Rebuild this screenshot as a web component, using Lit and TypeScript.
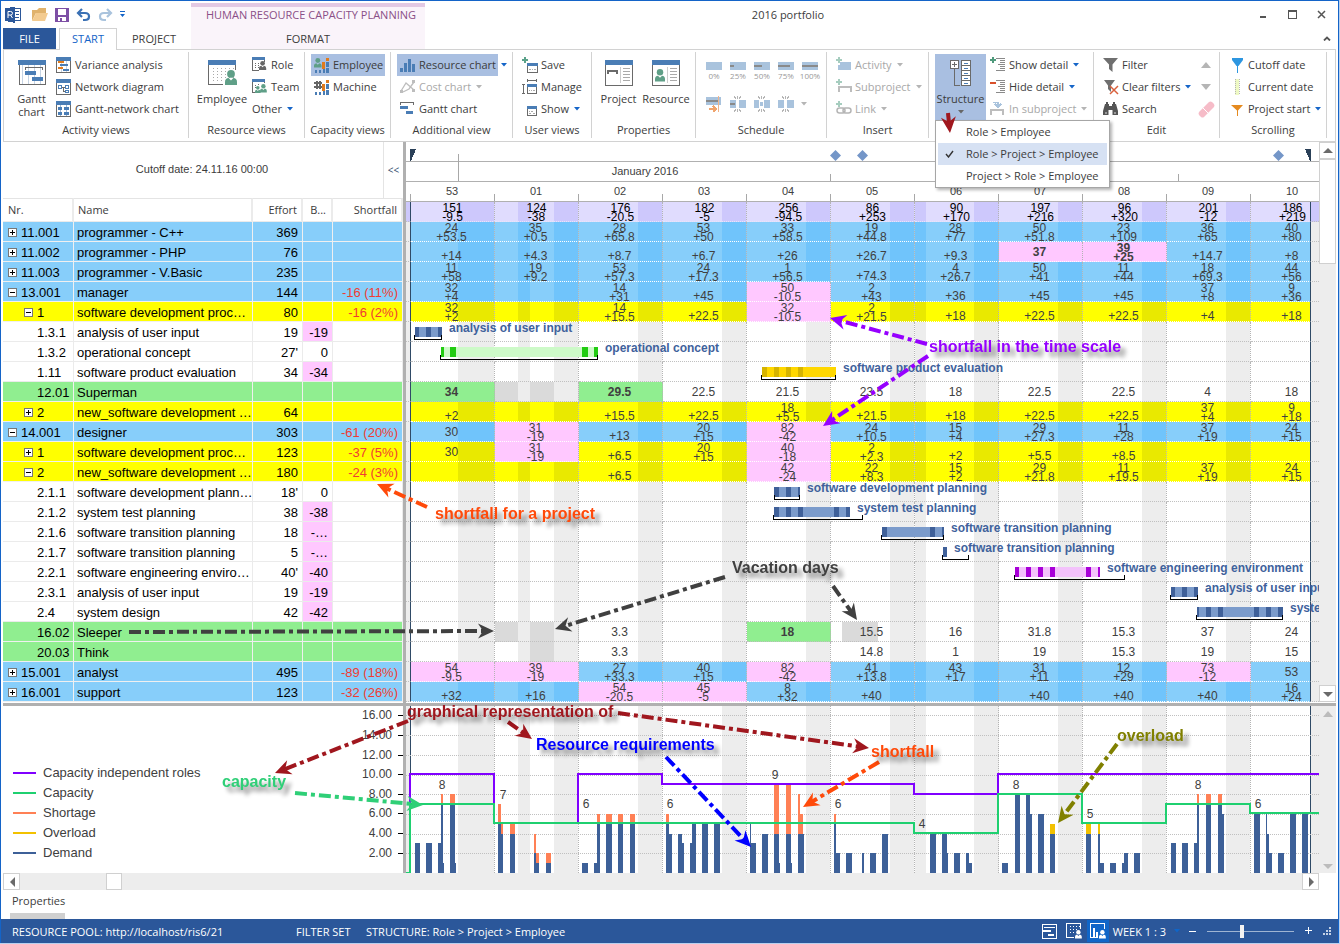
import { LitElement, html, svg, css, nothing, TemplateResult } from "lit";
import { customElement, property } from "lit/decorators.js";
import { classMap } from "lit/directives/class-map.js";
import { styleMap } from "lit/directives/style-map.js";

/* ---------- shared styles ---------- */

const base = css`
  * { box-sizing: border-box; }
  button { background: none; border: 0; padding: 0; margin: 0; font: inherit; color: inherit; cursor: default; }
  svg { display: block; flex: none; }
`;

/* ---------- icons ---------- */

const BLUE = "#4a7db5";
const GREY = "#6a6a6a";

const icon = (w: number, h: number, body: unknown, smooth = false) => html`<svg
  width=${w} height=${h} viewBox="0 0 ${w} ${h}" fill="none"
  shape-rendering=${smooth ? "auto" : "crispEdges"} aria-hidden="true">${body}</svg>`;

const frame16 = svg`<path d="M.5 1v14h14V1" fill="#fff" stroke=${GREY}/><path d="M0 0h15v4H0z" fill=${BLUE}/>`;
const person = (x: number, y: number, c: string, s = 1) => svg`<g transform="translate(${x} ${y}) scale(${s})" fill=${c} shape-rendering="auto">
  <circle cx="4" cy="2.6" r="2.6"/><path d="M0 10V8q0-2.4 2.4-2.6L4 7l1.600-1.600Q8 5.600 8 8v2z"/></g>`;
const plus = (c = "#5aa28a") => svg`<path d="M2 0h2v2h2v2H4v2H2V4H0V2h2z" fill=${c}/>`;
const bars = svg`<path d="M8 5h3v7H8zM12 1h3v3h-3z" fill="#e07b1e"/><path d="M12 5h3v5h-3zM1 13h2v3H1zM5 13h2v3H5zM9 12h2v4H9zM12 11h3v5h-3z" fill=${BLUE}/>`;
const bigDots = svg`<path d="M5 8v14M9 8v14M13 8v14M17 8v14M21 8v14M25 8v14" stroke="#a9a9a9" stroke-dasharray="1 2"/>`;
const outline = svg`<path d="M6 1.500h9M10 3.500h5M10 5.500h5M8 7.500h7M10 9.500h5M10 11.500h5M6 13.500h9" stroke="#8a8a8a"/>`;
const page = svg`<path d="M.5.5h27v25H.5z" fill="#fff" stroke=${GREY}/><path d="M0 0h28v5H0z" fill=${BLUE}/><path d="M15.500 7v16" stroke="#ccc"/><path d="M18 8.500h7M18 11.500h7M18 14.500h7M18 17.500h7M18 20.500h7" stroke="#aaa"/>`;

const icons: Record<string, TemplateResult> = {
  gantt: icon(28, 25, svg`<path d="M1 1h26v23H1z" fill="#fff" stroke=${GREY}/><path d="M0 0h28v5H0z" fill=${BLUE}/>
    <path d="M4.500 5v19M10.500 5v19M16.500 5v19M22.500 5v19" stroke="#c5d3e4"/>
    <path d="M7.500 10V7.500h17V10" stroke=${GREY}/><path d="M7 11h11v4H7zM14 17h11v4H14z" fill=${BLUE}/>`),
  variance: icon(16, 16, svg`${frame16}<path d="M5.500 4v11M10.500 4v11" stroke="#c5d3e4"/><path d="M2 4h6v2H2zM2 10h5v2H2z" fill="#e07b1e"/><path d="M4 7h8v2H4zM7 12h6v2H7z" fill=${BLUE}/>`),
  network: icon(16, 16, svg`${frame16}<path d="M6 8h3M7.500 8v4H9" stroke=${GREY}/><path d="M2.500 6.500h3v3h-3zM9.500 6.500h3v3h-3zM9.500 11.500h3v2h-3z" fill="#fff" stroke=${BLUE}/>`),
  ganttnet: icon(16, 16, svg`${frame16}<path d="M4.500 4v11M10.500 4v11" stroke="#9db6d3"/><path d="M2 6h4v3H2zM8 6h5v3H8zM2 11h4v3H2zM8 11h5v3H8z" fill=${BLUE}/>`),
  bigEmployee: icon(29, 25, svg`<path d="M15 24.500H.5V1M27.500 1v9" stroke=${GREY}/><path d="M0 0h28v5H0z" fill=${BLUE}/>${bigDots}${person(16, 9, "#fff", 1.600)}${person(17, 10, "#5f9f87", 1.500)}`),
  role: icon(16, 16, svg`<path d="M.5 1v12h6M12.500 2v3" stroke=${GREY}/><path d="M0 0h13v3H0z" fill=${BLUE}/><path d="M3 6.500h1M3 8.500h1M3 10.500h1M6 6.500h1M6 8.500h1M6 10.500h1" stroke=${GREY}/>${person(7, 4, "#666", 0.900)}`),
  team: icon(16, 16, svg`<path d="M.5 1v12h3M12.500 2v2" stroke=${GREY}/><path d="M0 0h13v3H0z" fill=${BLUE}/><path d="M3 6.500h1M6 5.500h1M3 8.500h1" stroke=${GREY}/>${person(3, 7, "#5f9f87", 0.700)}${person(8, 5, "#5f9f87", 0.850)}`),
  employee: icon(17, 16, svg`${bars}${person(0, 1, "#5f9f87", 0.950)}`),
  machine: icon(17, 16, svg`${bars}<path d="M2 2h2v8H2zM5 2h2v8H5zM0 3h8v2H0zM0 7h8v2H0z" fill="#666"/>`),
  chart: icon(16, 16, svg`<path d="M0 11h3v4H0zM4 6h3v9H4zM8 2h3v13H8zM12 7h3v8h-3z" fill=${BLUE}/>`),
  cost: icon(16, 16, svg`<path d="M1 12l5-8 8 7M3 13l6-3 5-7" stroke="#bdbdbd" stroke-width="1.300"/><path d="M0 11h3v3H0zM12 1h3v3h-3zM12 10h3v3h-3z" fill="#bdbdbd"/>`, true),
  ganttSmall: icon(16, 16, svg`<path d="M.5 4V1.500h13V4" stroke=${GREY}/><path d="M0 5h8v3H0zM6 10h7v3H6z" fill=${BLUE}/>`),
  save: icon(16, 16, svg`${plus()}<path d="M5.500 6v9.500h10V6" fill="#fff" stroke=${GREY}/><path d="M5 6h11v3H5z" fill=${BLUE}/><path d="M7 12.500h2M10 12.500h1M12 12.500h2" stroke="#aaa"/>`),
  manage: icon(16, 16, svg`<path d="M5 1.500h10M5.500 0v3M14.500 0v3M1.500 5v10M0 5.500h3M0 14.500h3M5.500 6v8.500h9V6" stroke=${GREY}/><path d="M5 5h10v3H5z" fill=${BLUE}/><path d="M7 11.500h1M9 11.500h1M11 11.500h2" stroke="#aaa"/>`),
  show: icon(16, 16, svg`<path d="M5.500 6v8.500h9V6" fill="#fff" stroke=${GREY}/><path d="M5 5h10v3H5z" fill=${BLUE}/><path d="M7 10.500h1M9 10.500h2M7 12.500h2M11 12.500h2" stroke="#aaa"/>`),
  bigProject: icon(28, 26, svg`${page}<path d="M2 10h11v4h-2v-2H4v2H2z" fill=${GREY}/>`),
  bigResource: icon(28, 26, svg`${page}${person(3, 9, "#5f9f87", 1.250)}`),
  activity: icon(16, 16, svg`<path d="M4 5h11v8H2V8h2z" fill="#a9c3dd"/>${plus("#a6cdbf")}`),
  subproject: icon(16, 16, svg`<path d="M3 13V8h12v5" stroke="#bdbdbd" stroke-width="2"/>${plus("#a6cdbf")}`),
  link: icon(16, 16, svg`<g shape-rendering="auto"><rect x="1" y="7" width="8" height="5" rx="2.500" stroke="#b5b5b5" stroke-width="1.500"/><rect x="7" y="7" width="8" height="5" rx="2.500" stroke="#b5b5b5" stroke-width="1.500"/></g>${plus("#a6cdbf")}`),
  structure: icon(22, 26, svg`<path d="M4.500 9v16.500H10" stroke=${GREY}/><path d="M.5.5h8v8h-8z" fill="#fff" stroke=${GREY}/><path d="M2 4.500h5M4.500 2v5" stroke=${GREY}/>
    <path d="M11.500.5h9v25h-9z" fill="#fff" stroke=${GREY}/><path d="M11 5.500h10M11 10.500h10M11 15.500h10M11 20.500h10" stroke=${GREY}/><path d="M14 3.500h4M14 8.500h4M14 13.500h4M14 18.500h4M14 23.500h4" stroke=${BLUE}/>`),
  showDetail: icon(16, 16, svg`${plus("#4f9a7c")}${outline}`),
  hideDetail: icon(16, 16, svg`<path d="M0 3h6v2H0z" fill="#d9512c"/>${outline}`),
  inSub: icon(16, 16, svg`<path d="M1 14V9h12v5" stroke="#bdbdbd" stroke-width="2"/><path d="M3 1.500h5V5M5 3l3 3 3-3" stroke="#a9c3dd" stroke-width="1.500"/>`),
  filter: icon(16, 16, svg`<path d="M0 1h15L9.500 7.500V15L6 12V7.500z" fill="#6f6f6f"/>`, true),
  clearFilter: icon(16, 16, svg`<path d="M1 1h11L8 6.500V13L5 10V6.500z" fill="#6f6f6f"/><path d="M7 7l8 8M15 7l-8 8" stroke="#d9603c" stroke-width="1.500"/>`, true),
  search: icon(16, 16, svg`<path d="M2 3h4v2h3V3h4l2 7v4H9.500V9h-4v5H0v-4z" fill="#555"/><path d="M3 1h2v2H3zM10 1h2v2h-2z" fill="#555"/><path d="M2 12h2M11 12h2" stroke="#ddd"/>`, true),
  cutoff: icon(16, 16, svg`<path d="M3 1h11v2L9.500 9h-2L3 3z" fill="#2d96e0"/><path d="M8 8h1v8H8z" fill="#2d96e0"/>`, true),
  current: icon(16, 16, svg`<path d="M6 0h4v16H6z" fill="#eef9c4"/><path d="M6.500 0v16M10.500 0v16" stroke="#b5b5b5" stroke-dasharray="1 1"/>`),
  start: icon(16, 16, svg`<path d="M2 4h12L9 9.500V15H8V9.500z" fill="#e58a1f"/>`, true),
  eraser: icon(17, 17, svg`<path d="M1 11L11 1q1.500-1 3 0l2 2q1 1.500 0 3L6 16q-1.500 1-3 0l-2-2q-1-1.500 0-3z" fill="#f6bcc8"/><path d="M5 7l5 5" stroke="#fff"/>`, true),
};

const caret = (c: string) => icon(6, 4, svg`<path d="M0 0h6L3 3.500z" fill=${c}/>`, true);

/* ---------- data ---------- */

const WEEKS = ["53", "01", "02", "03", "04", "05", "06", "07", "08", "09", "10"];

type Kind = "blue" | "yellow" | "green" | "plain" | "sum";
interface Bar { tone: string; from: number; to: number; dark: number[][]; span: number[]; label: string; labelAt: number; }
interface Row {
  kind: Kind; nr: string; name: string; effort?: string; b?: string; shortfall?: string;
  box?: "+" | "-"; child?: boolean; cells?: string[]; bar?: Bar;
}

const bar = (tone: string, from: number, to: number, dark: number[][], span: number[], labelAt: number, label: string): Bar =>
  ({ tone, from, to, dark, span, labelAt, label });
const list = (s: string) => s.split(",");

/* Cell notation: "top|bottom"; a leading p, g, v, w or u selects the fill, * means bold. */
const SUM = list("151|-9.5,124|-38,176|-20.5,182|-5,256|-94.5,86|+253,90|+170,197|+216,96|+320,201|-12,186|+219");

const ROWS: Row[] = [
  { kind: "blue", nr: "11.001", name: "programmer - C++", effort: "369", box: "+", cells: list("24|+53.5,35|+0.5,28|+65.8,53|+50,33|+58.5,19|+44.8,28|+77,50|+51.8,23|+109,36|+65,40|+80") },
  { kind: "blue", nr: "11.002", name: "programmer - PHP", effort: "76", box: "+", cells: list("|+14,|+4.3,|+8.7,|+6.7,|+26,|+26.7,|+9.3,p*37,p*39|+25,|+14.7,|+8") },
  { kind: "blue", nr: "11.003", name: "programmer - V.Basic", effort: "235", box: "+", cells: list("11|+58,19|+9.2,53|+57.3,24|+17.3,1|+56.5,|+74.3,4|+26.7,50|+41,11|+44,18|+69.3,44|+56") },
  { kind: "blue", nr: "13.001", name: "manager", effort: "144", shortfall: "-16 (11%)", box: "-", cells: list("32|+4,,14|+31,|+45,p50|-10.5,2|+43,|+36,|+45,|+45,37|+8,9|+36") },
  { kind: "yellow", nr: "1", name: "software development proc…", effort: "80", shortfall: "-16 (2%)", box: "-", child: true, cells: list("32|+2,,14|+15.5,|+22.5,p32|-10.5,2|+21.5,|+18,|+22.5,|+22.5,|+4,|+18") },
  { kind: "plain", nr: "1.3.1", name: "analysis of user input", effort: "19", b: "-19", bar: bar("steel", 415, 442, [[415, 419], [426, 431], [438, 442]], [414, 442], 449, "analysis of user input") },
  { kind: "plain", nr: "1.3.2", name: "operational concept", effort: "27'", b: "0", bar: bar("lime", 441, 598, [[441, 444], [450, 456], [582, 588], [594, 598]], [440, 598], 605, "operational concept") },
  { kind: "plain", nr: "1.11", name: "software product evaluation", effort: "34", b: "-34", bar: bar("gold", 762, 836, [[762, 767], [774, 779], [786, 791], [798, 803]], [761, 836], 843, "software product evaluation") },
  { kind: "green", nr: "12.01", name: "Superman", cells: list("g*34,v,g*29.5,22.5,21.5,23.5,18,22.5,22.5,4,18") },
  { kind: "yellow", nr: "2", name: "new_software development …", effort: "64", box: "+", child: true, cells: list("|+2,,|+15.5,|+22.5,18|+5.5,|+21.5,|+18,|+22.5,|+22.5,37|+4,9|+18") },
  { kind: "blue", nr: "14.001", name: "designer", effort: "303", shortfall: "-61 (20%)", box: "-", cells: list("30,p31|-19,|+13,20|+15,p82|-42,24|+10.5,15|+4,29|+27.3,11|+28,37|+19,24|+15") },
  { kind: "yellow", nr: "1", name: "software development proc…", effort: "123", shortfall: "-37 (5%)", box: "+", child: true, cells: list("30,p31|-19,|+6.5,20|+15,p40|-18,2|+2.3,|+2,|+5.5,|+8.5,,") },
  { kind: "yellow", nr: "2", name: "new_software development …", effort: "180", shortfall: "-24 (3%)", box: "-", child: true, cells: list(",,|+6.5,,p42|-24,22|+8.3,15|+2,29|+21.8,11|+19.5,37|+19,24|+15") },
  { kind: "plain", nr: "2.1.1", name: "software development plann…", effort: "18'", b: "0", bar: bar("steel", 774, 800, [[774, 779], [786, 791], [798, 800]], [774, 800], 807, "software development planning") },
  { kind: "plain", nr: "2.1.2", name: "system test planning", effort: "38", b: "-38", bar: bar("steel", 774, 850, [[774, 779], [786, 791], [798, 803], [834, 839], [846, 850]], [773, 863], 857, "system test planning") },
  { kind: "plain", nr: "2.1.6", name: "software transition planning", effort: "18", b: "-…", bar: bar("steel", 882, 944, [[882, 887], [930, 935], [942, 944]], [881, 944], 951, "software transition planning") },
  { kind: "plain", nr: "2.1.7", name: "software transition planning", effort: "5", b: "-…", bar: bar("steel", 943, 947, [[943, 947]], [942, 969], 954, "software transition planning") },
  { kind: "plain", nr: "2.2.1", name: "software engineering enviro…", effort: "40'", b: "-40", bar: bar("violet", 1015, 1100, [[1015, 1019], [1026, 1031], [1038, 1043], [1050, 1055], [1086, 1091], [1098, 1100]], [1014, 1125], 1107, "software engineering environment") },
  { kind: "plain", nr: "2.3.1", name: "analysis of user input", effort: "19", b: "-19", bar: bar("steel", 1171, 1198, [[1171, 1175], [1182, 1187], [1194, 1198]], [1170, 1198], 1205, "analysis of user input") },
  { kind: "plain", nr: "2.4", name: "system design", effort: "42", b: "-42", bar: bar("steel", 1197, 1283, [[1197, 1199], [1206, 1211], [1218, 1223], [1254, 1259], [1266, 1271], [1278, 1283]], [1196, 1283], 1290, "system design") },
  { kind: "green", nr: "16.02", name: "Sleeper", cells: list(",v,3.3,,g*18,u15.5,16,31.8,15.3,37,24") },
  { kind: "green", nr: "20.03", name: "Think", cells: list(",w,3.3,,,14.8,1,19,15.3,19,15") },
  { kind: "blue", nr: "15.001", name: "analyst", effort: "495", shortfall: "-89 (18%)", box: "+", cells: list("p54|-9.5,p39|-19,27|+33.3,40|+15,p82|-42,41|+13.8,43|+17,31|+11,12|+29,p73|-12,53") },
  { kind: "blue", nr: "16.001", name: "support", effort: "123", shortfall: "-32 (26%)", box: "+", cells: list("|+32,|+16,p54|-20.5,p45|-5,8|+32,|+40,,|+40,|+40,|+40,16|+24") },
];

/* Start x, end x, demand, then total and colour of what lies above the demand. */
type Load = [number, number, number, number?, string?];
const S = "#ff8055", O = "#f2c100";
const LOADS: Load[] = [
  [415, 420, 3], [426, 432, 3], [438, 441, 3], [441, 443, 7, 8, S], [443, 444, 1], [450, 455, 7, 8, S], [455, 456, 1],
  [498, 501, 5, 7, S], [501, 503, 4, 5, S], [510, 515, 4, 5, S], [534, 536, 2, 4, S], [536, 539, 1, 2, S], [546, 551, 1, 2, S],
  [582, 588, 1], [594, 597, 1], [597, 600, 5, 6, S], [606, 612, 5, 6, S], [618, 623, 5, 6, S], [630, 635, 5, 6, S],
  [666, 669, 5, 6, S], [669, 672, 4], [678, 682, 4], [682, 684, 3], [690, 692, 3], [692, 696, 5], [702, 708, 5], [714, 720, 5],
  [750, 751, 5], [751, 756, 3], [762, 768, 4], [774, 779, 4, 9, S], [779, 780, 1], [786, 791, 4, 9, S], [791, 792, 1], [798, 800, 4, 8, S], [800, 803, 4, 6, S], [803, 804, 4],
  [834, 836, 5, 6, S], [836, 840, 2], [846, 852, 2], [862, 864, 2], [870, 876, 2], [882, 888, 4],
  [930, 936, 4], [942, 947, 4], [947, 948, 2], [954, 960, 2], [966, 969, 2], [969, 972, 1],
  [1002, 1008, 1], [1015, 1020, 8], [1026, 1030, 8], [1030, 1032, 6], [1038, 1044, 6], [1050, 1055, 4, 5, O],
  [1086, 1091, 4, 5, O], [1098, 1100, 4, 5, O], [1100, 1104, 1], [1110, 1116, 1], [1122, 1124, 1], [1124, 1128, 2], [1134, 1140, 2],
  [1171, 1176, 3], [1182, 1188, 3], [1194, 1197, 3], [1197, 1199, 7, 8, S], [1206, 1211, 7, 8, S], [1218, 1222, 7, 8, S], [1222, 1224, 6],
  [1254, 1260, 6], [1266, 1267, 6], [1267, 1269, 4], [1269, 1272, 2], [1278, 1284, 2], [1290, 1296, 6], [1302, 1308, 6],
];
const PEAKS: [number, number, string][] = [
  [442, 789, "8"], [503, 799, "7"], [586, 808, "6"], [670, 808, "6"], [775, 779, "9"], [838, 808, "6"],
  [922, 828, "4"], [1016, 789, "8"], [1090, 818, "5"], [1198, 789, "8"], [1258, 808, "6"],
];
const level = (v: number) => Math.round(873 - 9.85 * v);

/* ---------- ribbon ---------- */

@customElement("ribbon-bar")
export class RibbonBar extends LitElement {
  static styles = [base, css`
    :host { display: flex; border: 1px solid #d2d2d2; height: 93px; color: #3c3c3c; }
    .group { flex: none; display: flex; flex-direction: column; margin-top: 2px; height: 86px; padding: 2px 0 0 6px; border-right: 1px solid #d2d2d2; }
    .body { display: flex; height: 66px; }
    .caption { margin-left: -6px; text-align: center; line-height: 20px; height: 18px; }
    .g1 { width: 185px; } .g2 { width: 116px; } .g3 { width: 86px; } .g4 { width: 122px; } .g5 { width: 79px; }
    .g6 { width: 104px; } .g7 { width: 131px; } .g8 { width: 102px; } .g9 { width: 165px; } .g10 { width: 126px; } .g11 { width: 107px; }
    .stack { display: flex; flex-direction: column; align-items: flex-start; }
    .line { display: flex; align-items: center; }
    .item { display: flex; align-items: center; gap: 3px; height: 22px; padding: 0 2px 0 3px; white-space: nowrap; }
    .item .glyph { width: 16px; }
    .item .words { padding-bottom: 2px; }
    .more { width: 11px; height: 22px; padding-left: 1px; display: flex; align-items: center; justify-content: center; }
    .on { background: #a9bfe1; }
    .off { color: #a8a8a8; }
    .big { display: flex; flex-direction: column; align-items: center; gap: 5px; padding-top: 6px; line-height: 13px; text-align: center; height: 66px; }
    .big .pic { height: 27px; display: flex; align-items: flex-start; }
    .w43 { width: 43px; } .w54 { width: 54px; } .w41 { width: 41px; } .w51 { width: 51px; }
    .big.on { margin-right: 1px; }
    .tiles { display: grid; grid-template-columns: repeat(5, 24px); grid-template-rows: 33px 33px; }
    .tile { display: flex; flex-direction: column; align-items: center; justify-content: center; gap: 1px; font-size: 8px; line-height: 9px; color: #999; }
    .tiles .more { height: 33px; padding: 0; }
    .anchor { position: relative; }
    .menu { position: absolute; z-index: 5; top: 66px; left: 0; width: 175px; padding: 0 2px; margin: 0; list-style: none; background: #fff; border: 1px solid #a6a6a6; box-shadow: 2px 2px 3px rgba(0, 0, 0, 0.3); }
    .menu button { display: flex; align-items: center; width: 100%; height: 22px; padding-bottom: 1px; white-space: nowrap; }
    .menu .tick { width: 28px; padding-left: 7px; }
    .menu .chosen { background: #d6e1f3; }
    .side { margin-left: auto; width: 30px; display: flex; flex-direction: column; }
    .side button { height: 22px; display: flex; justify-content: center; align-items: center; }
  `];

  private item(glyph: string, label: string, opt: { on?: boolean; off?: boolean; more?: boolean } = {}) {
    return html`<div class="line">
      <button class=${classMap({ item: true, on: !!opt.on, off: !!opt.off })} ?disabled=${opt.off}>
        ${glyph ? html`<span class="glyph">${icons[glyph]}</span>` : nothing}<span class="words">${label}</span>
      </button>
      ${opt.more ? html`<button class="more" aria-label="${label} options">${caret(opt.off ? "#b5b5b5" : "#1565c8")}</button>` : nothing}
    </div>`;
  }

  private group(n: number, caption: string, body: unknown) {
    return html`<section class="group g${n}" aria-label=${caption || "Structure"}><div class="body">${body}</div><div class="caption">${caption}</div></section>`;
  }

  private tile(fill: number, label: string) {
    return html`<button class="tile">${icon(16, 8, svg`<path d="M0 0h16v8H0z" fill="#a9c3dd"/><path d="M0 4h${fill}" stroke="#8a8a8a" stroke-width="2"/>`)}<span>${label}</span></button>`;
  }

  private split(kind: number) {
    return html`<button class="tile" aria-label="Split ${kind}">${icon(16, 16, kind === 0
      ? svg`<path d="M0 1h15v8H0z" fill="#a9c3dd"/><path d="M0 5h12" stroke="#8a8a8a" stroke-width="2"/><path d="M12.500 0v16" stroke="#f0b48a"/><path d="M3 13h7M7 10l3 3-3 3" stroke="#f0a46c" stroke-width="2"/>`
      : svg`<path d="M0 4h6v8H0zM9 4h7v8H9z" fill="#a9c3dd"/><path d="M4 0l2 3M11 0L9 3M7.500 0v3M4 16l2-3M11 16l-2-3M7.500 16v-3" stroke="#b5b5b5"/>${kind === 1 ? svg`<path d="M0 8h5" stroke="#8a8a8a" stroke-width="2"/>` : nothing}${kind === 2 ? svg`<path d="M5 4h5v8H5z" fill="#fff"/><path d="M6 6h3v4H6z" fill="#a9c3dd"/>` : nothing}`)}</button>`;
  }

  render() {
    const big = (glyph: string, label: unknown, w: string) => html`<button class="big ${w}"><span class="pic">${icons[glyph]}</span><span>${label}</span></button>`;
    return html`
      ${this.group(1, "Activity views", html`${big("gantt", html`Gantt<br>chart`, "w43")}
        <div class="stack">${this.item("variance", "Variance analysis")}${this.item("network", "Network diagram")}${this.item("ganttnet", "Gantt-network chart")}</div>`)}
      ${this.group(2, "Resource views", html`${big("bigEmployee", "Employee", "w54")}
        <div class="stack">${this.item("role", "Role")}${this.item("team", "Team")}${this.item("", "Other", { more: true })}</div>`)}
      ${this.group(3, "Capacity views", html`<div class="stack">${this.item("employee", "Employee", { on: true })}${this.item("machine", "Machine")}</div>`)}
      ${this.group(4, "Additional view", html`<div class="stack">${this.item("chart", "Resource chart", { on: true, more: true })}${this.item("cost", "Cost chart", { off: true, more: true })}${this.item("ganttSmall", "Gantt chart")}</div>`)}
      ${this.group(5, "User views", html`<div class="stack">${this.item("save", "Save")}${this.item("manage", "Manage")}${this.item("show", "Show", { more: true })}</div>`)}
      ${this.group(6, "Properties", html`${big("bigProject", "Project", "w41")}${big("bigResource", "Resource", "w54")}`)}
      ${this.group(7, "Schedule", html`<div class="tiles">${this.tile(0, "0%")}${this.tile(4, "25%")}${this.tile(8, "50%")}${this.tile(12, "75%")}${this.tile(16, "100%")}
        ${this.split(0)}${this.split(1)}${this.split(2)}${this.split(3)}<button class="more" aria-label="Split options">${caret("#b5b5b5")}</button></div>`)}
      ${this.group(8, "Insert", html`<div class="stack">${this.item("activity", "Activity", { off: true, more: true })}${this.item("subproject", "Subproject", { off: true, more: true })}${this.item("link", "Link", { off: true, more: true })}</div>`)}
      ${this.group(9, "", html`<div class="anchor">
          <button class="big on w51" aria-haspopup="menu" aria-expanded="true"><span class="pic">${icons.structure}</span><span>Structure</span>${caret("#666")}</button>
          <ul class="menu" role="menu">
            <li><button role="menuitemradio" aria-checked="false"><span class="tick"></span>Role &gt; Employee</button></li>
            <li><button class="chosen" role="menuitemradio" aria-checked="true"><span class="tick">${icon(10, 8, svg`<path d="M1 4l2.500 3L8 1" stroke="#333" stroke-width="1.400"/>`, true)}</span>Role &gt; Project &gt; Employee</button></li>
            <li><button role="menuitemradio" aria-checked="false"><span class="tick"></span>Project &gt; Role &gt; Employee</button></li>
          </ul>
        </div>
        <div class="stack">${this.item("showDetail", "Show detail", { more: true })}${this.item("hideDetail", "Hide detail", { more: true })}${this.item("inSub", "In subproject", { off: true, more: true })}</div>`)}
      ${this.group(10, "Edit", html`<div class="stack">${this.item("filter", "Filter")}${this.item("clearFilter", "Clear filters", { more: true })}${this.item("search", "Search")}</div>
        <div class="side"><button aria-label="Previous">${icon(10, 6, svg`<path d="M0 6h10L5 0z" fill="#b5b5b5"/>`, true)}</button><button aria-label="Next">${icon(10, 6, svg`<path d="M0 0h10L5 6z" fill="#b5b5b5"/>`, true)}</button><button aria-label="Erase">${icons.eraser}</button></div>`)}
      ${this.group(11, "Scrolling", html`<div class="stack">${this.item("cutoff", "Cutoff date")}${this.item("current", "Current date")}${this.item("start", "Project start", { more: true })}</div>`)}
    `;
  }
}

/* ---------- resource table ---------- */

@customElement("resource-table")
export class ResourceTable extends LitElement {
  static styles = [base, css`
    :host { display: block; flex: none; width: 400px; font: 13px/17px "Liberation Sans", Arial, sans-serif; color: #000; }
    .head { display: flex; height: 56px; font-size: 11px; color: #3c3c3c; }
    .head p { flex: 1; margin: 0; padding-left: 18px; text-align: center; line-height: 54px; border-right: 1px solid #e4e4e4; }
    .head button { width: 19px; font: 10px "Open Sans", sans-serif; color: #2f4a6b; }
    table { width: 100%; table-layout: fixed; border-collapse: separate; border-spacing: 0; }
    th { height: 24px; padding: 0 5px; border-top: 1px solid #e4e4e4; border-right: 2px solid #ebebeb; border-bottom: 1px solid #ebebeb; font: 11px/22px "Open Sans", "Noto Sans", sans-serif; color: #3c3c3c; text-align: right; }
    th:nth-child(-n + 2) { text-align: left; }
    th:nth-child(2), th:nth-child(3), th:nth-child(5) { padding: 0 4px; }
    .c1 { width: 71px; } .c2 { width: 179px; } .c3 { width: 50px; } .c4 { width: 30px; } .c5 { width: 70px; }
    td { height: 20px; padding: 2px 4px 0 3px; text-align: right; white-space: nowrap; overflow: hidden; border-right: 1px solid #ebebeb; border-bottom: 1px solid #ebebeb; }
    td.nr { padding: 2px 0 0 5px; text-align: left; }
    td.name { text-align: left; padding-right: 0; }
    .tree { display: flex; align-items: center; gap: 4px; }
    .child { padding-left: 16px; }
    .leaf { padding-left: 29px; }
    .box { width: 9px; height: 9px; }
    .blue td { background: #87cefa; } .yellow td { background: #ff0; } .green td { background: #90ee90; }
    .blue td, .yellow td, .green td { border-color: #f0f0f0; }
    td.loss { color: #f03c32; }
    td.pink { background: #ffc8ff; }
  `];

  private row(r: Row) {
    return html`<tr class=${r.kind}>
      <td class="nr"><div class=${classMap({ tree: true, child: !!r.child, leaf: !r.box })}>
        ${r.box ? html`<button class="box" aria-label=${r.box === "+" ? "Expand" : "Collapse"}>${icon(9, 9, svg`<path d="M.5.5h8v8h-8z" fill="#fff" stroke="#777"/><path d=${r.box === "+" ? "M2 4.500h5M4.500 2v5" : "M2 4.500h5"} stroke="#000"/>`)}</button>` : nothing}<span>${r.nr}</span></div></td>
      <td class="name">${r.name}</td><td>${r.effort}</td>
      <td class=${classMap({ pink: !!r.b && r.b !== "0" })}>${r.b}</td><td class="loss">${r.shortfall}</td></tr>`;
  }

  render() {
    return html`<div class="head"><p>Cutoff date: 24.11.16 00:00</p><button aria-label="Hide table">&lt;&lt;</button></div>
      <table><colgroup><col class="c1"><col class="c2"><col class="c3"><col class="c4"><col class="c5"></colgroup>
        <thead><tr><th>Nr.</th><th>Name</th><th>Effort</th><th>B...</th><th>Shortfall</th></tr></thead>
        <tbody>${ROWS.map((r) => this.row(r))}</tbody></table>`;
  }
}

/* ---------- week columns ---------- */

const weekStyles = css`
  .lane { display: flex; position: relative; }
  .edge { flex: none; width: 5px; background: #ededed; border-right: 1px solid #2f4a66; }
  .edge.end { width: 9px; border-right: 0; border-left: 1px solid #2f4a66; }
  .weeks { flex: 1; min-width: 0; display: grid; grid-template-columns: repeat(11, 84px); overflow-x: clip; overflow-y: visible; }
  .cell { --day: #fff; --rest: #ededed; border-right: 1px dotted #b4b4b4; background: linear-gradient(90deg, var(--day) 59px, var(--rest) 59px); }
  .k0 { background: linear-gradient(90deg, var(--day) 47px, var(--rest) 47px); }
  .k1 { background: linear-gradient(90deg, var(--day) 23px, var(--rest) 23px 35px, var(--day) 35px 59px, var(--rest) 59px); }
  .k6 { background: linear-gradient(90deg, var(--rest) 11px, var(--day) 11px 59px, var(--rest) 59px); }
`;

@customElement("time-grid")
export class TimeGrid extends LitElement {
  static styles = [base, weekStyles, css`
    :host { display: block; flex: 1; min-width: 0; overflow: hidden; background: #fff; font: 12px/17px "Liberation Sans", Arial, sans-serif; color: #404040; }
    .marks, .months, .dates { height: 20px; border-bottom: 1px solid #b0b0b0; font-size: 11px; line-height: 19px; display: flex; position: relative; }
    .mark { position: absolute; }
    .diamond { top: 8px; } .flag { top: 7px; }
    .months span { text-align: center; position: relative; background: linear-gradient(#a8a8a8, #a8a8a8) right bottom / 1px 7px no-repeat; }
    .lead { width: 53px; } .jan { width: 372px; } .feb { width: 348px; }
    .lead::after { content: ""; position: absolute; right: 0; top: -8px; bottom: 0; width: 1px; background: #a8a8a8; }
    .dates .weeks span, .dates .edge { background: linear-gradient(#a8a8a8, #a8a8a8) right bottom / 1px 7px no-repeat; text-align: center; padding-right: 2px; }
    .dates .edge { border: 0; }
    .lane { height: 20px; }
    .edge { border-bottom: 1px dotted #c0c0c0; }
    .cell { height: 20px; border-bottom: 1px dotted #c0c0c0; padding: 2px 2px 0 0; text-align: center; display: flex; flex-direction: column; white-space: nowrap; }
    .cell.two { line-height: 9px; }
    .cell.two span { height: 9px; }
    .sum .cell { --day: #e0dcfe; --rest: #cdc8fc; color: #000; padding-right: 0; border-bottom-color: #e8e6f8; }
    .sum .edge { background: #cdc8fc; }
    .blue .cell { --day: #87cefa; --rest: #70c4fb; border-bottom-color: #fff; }
    .yellow .cell { --day: #ff0; --rest: #e9e900; border-bottom-color: #fff; }
    .lane .cell.pink { background: #ffc8ff; }
    .lane .cell.full { background: #90ee90; }
    .bold { font-weight: bold; }
    .lane .cell.offA { background: linear-gradient(90deg, #dadada 23px, #ededed 23px 35px, #dadada 35px 59px, #ededed 59px); }
    .lane .cell.offB { background: linear-gradient(90deg, #fff 23px, #ededed 23px 35px, #dadada 35px 59px, #ededed 59px); }
    .lane .cell.offC { background: linear-gradient(90deg, #fff 11px, #dadada 11px 47px, #fff 47px 59px, #ededed 59px); }
    .task, .part, .span, .task-label { position: absolute; }
    .task, .part { top: 5px; height: 10px; }
    .span { top: 13px; height: 5px; border: 1px solid #000; border-top: 0; }
    .task-label { top: -2px; font-weight: bold; color: #3f629c; white-space: nowrap; }
    .steel { background: #7b9bcb; } .steel-d { background: #3f6099; }
    .lime { background: #cdfac8; } .lime-d { background: #22cc12; }
    .gold { background: #ffd700; } .gold-d { background: #d6b400; }
    .violet { background: #f3c2fb; } .violet-d { background: #a800d8; }
  `];

  private cell(raw: string, i: number) {
    const kind = raw[0] ?? "";
    let text = "pgvwu".includes(kind) && kind ? raw.slice(1) : raw;
    const bold = text.startsWith("*");
    if (bold) text = text.slice(1);
    const two = text.includes("|");
    const cls = { cell: true, [`k${i}`]: true, two, bold, pink: kind === "p", full: kind === "g", offA: kind === "v", offB: kind === "w", offC: kind === "u" };
    return html`<div class=${classMap(cls)}>${text.split("|").map((t) => html`<span>${t}</span>`)}</div>`;
  }

  private task(b: Bar) {
    const at = (a: number, z: number) => styleMap({ left: `${a - 406}px`, width: `${z - a}px` });
    return html`<div class="task ${b.tone}" style=${at(b.from, b.to)}></div>
      ${b.dark.map(([a, z]) => html`<div class="part ${b.tone}-d" style=${at(a, z)}></div>`)}
      <div class="span" style=${at(b.span[0], b.span[1])}></div>
      <div class="task-label" style=${styleMap({ left: `${b.labelAt - 406}px` })}>${b.label}</div>`;
  }

  private lane(kind: Kind, cells: string[] = [], b?: Bar) {
    return html`<div class="lane ${kind}"><div class="edge"></div>
      <div class="weeks">${WEEKS.map((_, i) => this.cell(cells[i] ?? "", i))}</div><div class="edge end"></div>${b ? this.task(b) : nothing}</div>`;
  }

  render() {
    return html`
      <div class="marks">
        <span class="mark flag" style=${styleMap({ left: "4px" })}>${icon(6, 12, svg`<path d="M0 0h6L1 12H0z" fill="#2a4058"/>`)}</span>
        ${[835, 862, 1278].map((x) => html`<span class="mark diamond" style=${styleMap({ left: `${x - 411}px` })}>${icon(11, 11, svg`<path d="M5.500 0L11 5.500 5.500 11 0 5.500z" fill="#7496c8"/>`, true)}</span>`)}
        <span class="mark flag" style=${styleMap({ left: "899px" })}>${icon(6, 12, svg`<path d="M0 0h6v12H5z" fill="#2a4058"/>`)}</span>
      </div>
      <div class="months"><span class="lead"></span><span class="jan">January 2016</span><span class="feb"></span></div>
      <div class="dates"><div class="edge"></div><div class="weeks">${WEEKS.map((w) => html`<span>${w}</span>`)}</div></div>
      ${this.lane("sum", SUM)}
      ${ROWS.map((r) => this.lane(r.kind, r.cells, r.bar))}`;
  }
}

/* ---------- load chart ---------- */

@customElement("load-chart")
export class LoadChart extends LitElement {
  static styles = [base, weekStyles, css`
    :host { display: block; flex: 1; min-width: 0; position: relative; overflow: hidden; }
    .lane { height: 100%; }
    .plot { position: absolute; left: 0; bottom: 0; }
    .peak { font: 12px "Liberation Sans", Arial, sans-serif; fill: #404040; }
  `];

  render() {
    return html`<div class="lane"><div class="edge"></div><div class="weeks">${WEEKS.map((_, i) => html`<div class="cell k${i}"></div>`)}</div><div class="edge end"></div></div>
      <svg class="plot" width="913" height="167" viewBox="406 706 913 167" fill="none" role="img" aria-label="Capacity and demand per week" shape-rendering="crispEdges">
        ${[16, 14, 12, 10, 8, 6, 4, 2].map((v) => svg`<path d="M406 ${level(v) + 0.5}H1319" stroke="#c0c0c0" stroke-dasharray="1 1"/>`)}
        ${LOADS.map(([a, z, d, t, c]) => svg`${t ? svg`<rect x=${a} y=${level(t)} width=${z - a} height=${level(d) - level(t)} fill=${c}/>` : nothing}
          <rect x=${a} y=${level(d)} width=${z - a} height=${873 - level(d)} fill="#3d6098"/>`)}
        <path d="M410 804V774H494V823H578V774H662V784H914V794H998V774H1319" stroke="#8000ff" stroke-width="2"/>
        <path d="M406 873H410V804H494V823H914V833H998V794H1082V823H1166V804H1250V813H1319" stroke="#1fd070" stroke-width="2"/>
        ${PEAKS.map(([x, y, t]) => svg`<text class="peak" x=${x} y=${y} text-anchor="middle">${t}</text>`)}
      </svg>`;
  }
}

/* ---------- call-outs laid over the window ---------- */

@customElement("callout-layer")
export class CalloutLayer extends LitElement {
  static styles = [base, css`
    :host { position: absolute; z-index: 10; left: 0; top: 0; pointer-events: none; }
    text { font: bold 16px "Liberation Sans", Arial, sans-serif; filter: drop-shadow(5px 5px 2px rgba(0, 0, 0, 0.45)); }
  `];

  private arrow(x1: number, y1: number, x2: number, y2: number, c: string) {
    const a = Math.atan2(y2 - y1, x2 - x1);
    const ex = x2 - 9 * Math.cos(a), ey = y2 - 9 * Math.sin(a);
    return svg`<line x1=${x1} y1=${y1} x2=${ex} y2=${ey} stroke=${c} stroke-width="4" stroke-dasharray="12 4 4 4"/>
      <path d="M0 0L-16 -7.500L-11 0L-16 7.500z" fill=${c} transform="translate(${x2} ${y2}) rotate(${(a * 180) / Math.PI})"/>`;
  }

  render() {
    const red = "#a0171e", fire = "#ff4a0a", violet = "#9600ff", ink = "#404040", green = "#2fcf77", olive = "#808000";
    const notes: [number, number, string, string][] = [
      [929, 352, violet, "shortfall in the time scale"], [435, 519, fire, "shortfall for a project"], [732, 573, ink, "Vacation days"],
      [407, 717, red, "graphical representation of"], [222, 787, green, "capacity"], [536, 750, "#0000ff", "Resource requirements"],
      [871, 757, fire, "shortfall"], [1117, 741, olive, "overload"],
    ];
    return html`<svg width="1340" height="944" viewBox="0 0 1340 944">
      ${this.arrow(927, 344, 830, 318, violet)}${this.arrow(928, 356, 823, 426, violet)}
      ${this.arrow(427, 507, 377, 484, fire)}
      ${this.arrow(725, 577, 555, 629, ink)}${this.arrow(833, 586, 857, 620, ink)}${this.arrow(129, 632, 494, 631, ink)}
      ${this.arrow(408, 721, 275, 773, red)}${this.arrow(508, 722, 532, 739, red)}${this.arrow(618, 713, 869, 748, red)}
      ${this.arrow(295, 793, 423, 805, green)}${this.arrow(666, 757, 751, 847, "#0000ff")}
      ${this.arrow(879, 762, 803, 807, fire)}${this.arrow(1117, 744, 1058, 823, olive)}
      ${this.arrow(948, 113, 950, 133, red)}
      ${notes.map(([x, y, c, t]) => svg`<text x=${x} y=${y} fill=${c}>${t}</text>`)}
    </svg>`;
  }
}

/* ---------- window ---------- */

@customElement("app-root")
export class AppRoot extends LitElement {
  @property({ type: Number }) zoom = 40;

  static styles = [base, css`
    :host { box-sizing: border-box; display: flex; flex-direction: column; position: relative; height: 100vh; min-height: 900px; padding: 0 1px 1px 0; background: #b8d0ef; font: 11px/15px "Open Sans", "Noto Sans", sans-serif; color: #3c3c3c; overflow: hidden; }
    .window { flex: 1; min-height: 0; display: flex; flex-direction: column; background: #fff; border: 1px solid #1464c8; border-bottom: 0; }
    .content { flex: 1; min-height: 0; display: flex; flex-direction: column; padding: 0 2px; }
    header { display: grid; grid-template-columns: 188px 234px 1fr auto; grid-template-rows: 27px 21px; }
    .quick { display: flex; align-items: center; gap: 7px; padding-left: 2px; }
    .quick .first { margin-right: 3px; }
    .context { grid-column: 2; grid-row: 1 / 3; margin-top: 2px; background: #faf4fa; border-top: 4px solid #e3c9e3; text-align: center; display: flex; flex-direction: column; color: #8a4f87; }
    .context span { line-height: 15px; padding-left: 6px; }
    .context button { flex: 1; padding-top: 6px; line-height: 15px; color: #3c3c3c; }
    h1 { margin: 0; font: inherit; line-height: 28px; text-align: center; }
    .controls { display: flex; align-items: center; gap: 20px; padding: 0 10px 0 108px; }
    .controls button { display: block; }
    nav { grid-column: 1; grid-row: 2; display: flex; }
    nav button { height: 21px; line-height: 21px; }
    .file { width: 53px; background: #2b579a; color: #fff; }
    .start { width: 58px; margin-left: 3px; background: #fff; color: #1464c8; border: 1px solid #d2d2d2; border-bottom: 0; position: relative; }
    nav .start { height: 22px; line-height: 19px; padding-bottom: 2px; }
    .project { margin-left: 15px; }
    .collapse { grid-column: 4; grid-row: 2; justify-self: end; padding-right: 5px; }
    .upper, .lower { display: flex; }
    .upper { flex: none; padding-bottom: 1px; }
    .lower { flex: 1; min-height: 120px; border-top: 3px solid #b0b0b0; }
    .divider { flex: none; width: 3px; background: #b0b0b0; }
    .upper .divider { margin-bottom: -1px; }
    .scroll { flex: none; width: 17px; background: #ededed; display: flex; flex-direction: column; }
    .knob { background: #fff; border: 1px solid #d0d0d0; display: flex; align-items: center; justify-content: center; width: 17px; height: 17px; flex: none; }
    .thumb { background: #fff; border: 1px solid #d0d0d0; height: 105px; }
    .push { margin-top: auto; }
    .lower .scroll { justify-content: space-between; align-items: center; padding: 4px 0 2px; }
    .info { flex: none; width: 400px; display: flex; justify-content: space-between; align-items: flex-end; font: 13px/20px "Liberation Sans", Arial, sans-serif; color: #404040; }
    .legend { list-style: none; margin: 0; padding: 0 0 10px 10px; }
    .legend li { display: flex; align-items: center; gap: 7px; }
    .swatch { width: 23px; height: 2px; }
    .violet { background: #8000ff; } .green { background: #1fd070; } .coral { background: #ff8055; } .amber { background: #f2c100; } .navy { background: #3d6098; }
    .axis { align-self: stretch; display: flex; flex-direction: column; padding-bottom: 10px; font-size: 12px; }
    .axis span { flex: 1; display: flex; align-items: center; justify-content: flex-end; gap: 6px; line-height: 19px; }
    .axis span::after { content: ""; width: 5px; height: 1px; background: #000; }
    .hscroll { flex: none; display: flex; height: 17px; margin-right: 17px; background: #ededed; }
    .hthumb { width: 16px; margin-left: 86px; background: #fff; border: 1px solid #d0d0d0; }
    .hend { margin-left: auto; }
    .panel { flex: none; height: 29px; padding-left: 7px; display: flex; }
    .panel button { padding: 2px 0 4px 2px; border-bottom: 6px solid #d0d0d0; line-height: 15px; height: 29px; }
    footer { flex: none; height: 24px; background: #2b579a; color: #fff; display: flex; align-items: center; padding: 0 6px 0 11px; white-space: nowrap; }
    .pool { width: 284px; } .set { width: 70px; } .shape { flex: 1; }
    .view { width: 22px; height: 22px; display: flex; align-items: center; justify-content: center; }
    .view + .view { margin-left: 2px; }
    .now { background: #1066c8; }
    .scale { display: flex; align-items: center; gap: 8px; margin: 0 9px 0 4px; }
    .sign { width: 8px; }
    input { appearance: none; -webkit-appearance: none; width: 87px; height: 15px; margin: 0 11px 0 10px; background: linear-gradient(#9fb4d2, #9fb4d2) center / 100% 1px no-repeat; }
    input::-webkit-slider-thumb { -webkit-appearance: none; width: 4px; height: 13px; background: #f2f2f2; }
    .grip { margin-left: 10px; }
  `];

  render() {
    const tri = (d: string, c = "#6a6a6a") => icon(10, 10, svg`<path d=${d} fill=${c}/>`, true);
    return html`
      <div class="window"><div class="content">
        <header>
          <div class="quick">
            <button class="first" aria-label="Application">${icon(17, 16, svg`<path d="M9 1.500h6.500v12H9z" fill="#fff" stroke="#2b579a"/><path d="M10 4.500h4M11 7.500h3M10 10.500h4" stroke="#2b579a"/><path d="M0 1l10-1v16L0 14z" fill="#2b579a"/><path d="M3 11V4.500h2.500q2 0 2 1.800T5.500 8H3M5.500 8L7.500 11" stroke="#fff" shape-rendering="auto"/>`)}</button>
            <button aria-label="Open">${icon(16, 14, svg`<path d="M0 13V2h5l2-2h7v5H4z" fill="#e0b26c"/><path d="M4 5h12l-3 8H0z" fill="#f3cb90"/>`, true)}</button>
            <button aria-label="Save">${icon(14, 14, svg`<path d="M0 0h14v14H0z" fill="#7d4fa5"/><path d="M3 1h8v6H3zM3 9h8v4H3z" fill="#fff"/><path d="M5 10h2v3H5z" fill="#7d4fa5"/>`)}</button>
            <button aria-label="Undo">${icon(15, 14, svg`<path d="M2 5h7q4 0 4 3.500T9 12H7M6 1L2 5l4 4" stroke="#3a70b4" stroke-width="2.200"/>`, true)}</button>
            <button aria-label="Redo">${icon(15, 14, svg`<path d="M13 5H6Q2 5 2 8.500T6 12h2M9 1l4 4-4 4" stroke="#a9c3dd" stroke-width="2.200"/>`, true)}</button>
            <button aria-label="Customize">${icon(6, 7, svg`<path d="M0 0h5v1H0zM0 3h5L2.500 6z" fill="#1464c8"/>`, true)}</button>
          </div>
          <nav><button class="file">FILE</button><button class="start">START</button><button class="project">PROJECT</button></nav>
          <div class="context"><span>HUMAN RESOURCE CAPACITY PLANNING</span><button>FORMAT</button></div>
          <h1>2016 portfolio</h1>
          <div class="controls">
            <button aria-label="Minimize">${icon(9, 9, svg`<path d="M1 6h6v2H1z" fill="#555"/>`)}</button>
            <button aria-label="Maximize">${icon(9, 9, svg`<path d="M.5.5h8v8h-8z" stroke="#555"/><path d="M0 1h9" stroke="#555"/>`)}</button>
            <button aria-label="Close">${icon(9, 9, svg`<path d="M1 1l7 7M8 1L1 8" stroke="#555" stroke-width="1.500"/>`, true)}</button>
          </div>
          <button class="collapse" aria-label="Collapse ribbon">${icon(8, 5, svg`<path d="M1 4.500l3-3 3 3" stroke="#555" stroke-width="1.800"/>`, true)}</button>
        </header>
        <ribbon-bar></ribbon-bar>
        <div class="upper">
          <resource-table></resource-table><div class="divider"></div><time-grid></time-grid>
          <div class="scroll"><button class="knob" aria-label="Scroll up">${tri("M0 7h10L5 2z")}</button><div class="thumb"></div><button class="knob push" aria-label="Scroll down">${tri("M0 3h10L5 8z")}</button></div>
        </div>
        <div class="lower">
          <div class="info">
            <ul class="legend">
              <li><span class="swatch violet"></span>Capacity independent roles</li><li><span class="swatch green"></span>Capacity</li>
              <li><span class="swatch coral"></span>Shortage</li><li><span class="swatch amber"></span>Overload</li><li><span class="swatch navy"></span>Demand</li>
            </ul>
            <div class="axis">${["16.00", "14.00", "12.00", "10.00", "8.00", "6.00", "4.00", "2.00"].map((t) => html`<span>${t}</span>`)}</div>
          </div>
          <div class="divider"></div><load-chart></load-chart>
          <div class="scroll">${tri("M0 7h10L5 1z", "#bcbcbc")}${tri("M0 3h10L5 8z", "#bcbcbc")}</div>
        </div>
        <div class="hscroll"><button class="knob" aria-label="Scroll left">${tri("M8 0v10L3 5z")}</button><div class="hthumb"></div><button class="knob hend" aria-label="Scroll right">${tri("M3 0v10l5-5z")}</button></div>
        <div class="panel"><button>Properties</button></div>
      </div>
      <footer>
        <span class="pool">RESOURCE POOL: http://localhost/ris6/21</span><span class="set">FILTER SET</span><span class="shape">STRUCTURE: Role &gt; Project &gt; Employee</span>
        <button class="view" aria-label="Gantt view">${icon(15, 15, svg`<path d="M.5.5h14v14H.5zM2 3h11" stroke="#fff"/><path d="M1 6h8v2H1zM6 10h6v2H6z" fill="#fff"/>`)}</button>
        <button class="view" aria-label="Resource view">${icon(16, 16, svg`<path d="M14.500 6V.5H.5v14H8" stroke="#fff"/><path d="M4 3v9M7 3v9M10 3v4M13 3v2" stroke="#fff" stroke-dasharray="1 2"/>${person(9, 7, "#fff", 0.850)}`)}</button>
        <button class="view now" aria-label="Capacity view">${icon(16, 16, svg`<path d="M14.500 6V.5H.5v14H8" stroke="#fff"/><path d="M3 5h2v9H3zM6 9h2v5H6z" fill="#fff"/>${person(9, 7, "#fff", 0.850)}`)}</button>
        <span class="scale">WEEK 1 : 3 ${caret("#1066c8")}</span>
        <button class="sign" aria-label="Zoom out">${icon(8, 8, svg`<path d="M0 4.500h7" stroke="#fff"/>`)}</button>
        <input type="range" min="0" max="100" .value=${String(this.zoom)} aria-label="Time scale">
        <button class="sign" aria-label="Zoom in">${icon(8, 8, svg`<path d="M0 3.500h7M3.500 0v7" stroke="#fff"/>`)}</button>
        <span class="grip">${icon(9, 9, svg`<path d="M6 0h2v2H6zM3 3h2v2H3zM6 3h2v2H6zM0 6h2v2H0zM3 6h2v2H3zM6 6h2v2H6z" fill="#c5d2e6"/>`)}</span>
      </footer></div>
      <callout-layer></callout-layer>`;
  }
}
